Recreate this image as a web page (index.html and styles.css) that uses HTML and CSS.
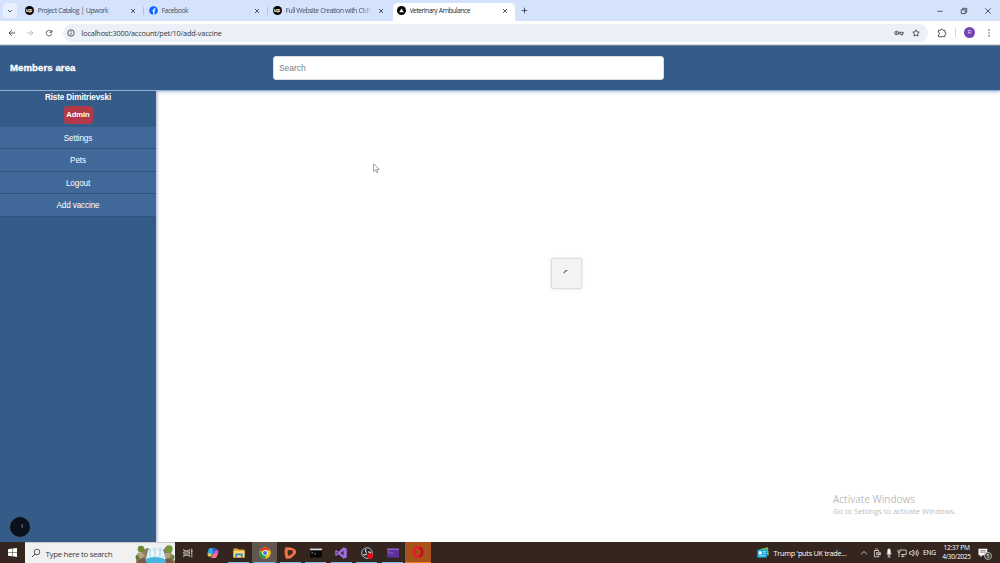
FILE: index.html
```html
<!DOCTYPE html>
<html lang="en">
<head>
  <meta charset="UTF-8">
  <title>Veterinary Ambulance</title>
  <meta name="viewport" content="width=device-width, initial-scale=1">
  <link rel="stylesheet" href="styles.css">
</head>
<body>
  <div class="tabs">
    <div class="tab-search"><svg width="6" height="6" viewBox="0 0 6 6"><path d="M1 2l2 2 2-2"/></svg></div>
    <div class="tab">
      <span class="favicon">up</span>
      <span class="tab-title t1">Project Catalog | Upwork</span>
      <svg class="close" viewBox="0 0 6 6"><path d="M1 1l4 4M5 1L1 5"/></svg>
    </div>
    <div class="tab line">
      <svg class="fb" viewBox="0 0 9 9"><circle cx="4.5" cy="4.5" r="4.3" fill="#0866ff"/><path d="M4.8 9V4.1Q4.8 2.7 6.4 2.9M3.3 5h2.8" stroke="#fff" stroke-width="1.2" fill="none"/></svg>
      <span class="tab-title t2">Facebook</span>
      <svg class="close" viewBox="0 0 6 6"><path d="M1 1l4 4M5 1L1 5"/></svg>
    </div>
    <div class="tab line">
      <span class="favicon">up</span>
      <span class="tab-title t3">Full Website Creation with CMS</span>
      <svg class="close" viewBox="0 0 6 6"><path d="M1 1l4 4M5 1L1 5"/></svg>
    </div>
    <div class="tab active">
      <span class="favicon"><svg width="5" height="5" viewBox="0 0 5 5"><path class="triangle" d="M2.5 .4L4.8 4.2H.2z"/></svg></span>
      <span class="tab-title t4">Veterinary Ambulance</span>
      <svg class="close" viewBox="0 0 6 6"><path d="M1 1l4 4M5 1L1 5"/></svg>
    </div>
    <svg class="plus" viewBox="0 0 7 7"><path d="M3.5 .7v5.6M.7 3.5h5.6"/></svg>
    <div class="window-buttons">
      <svg viewBox="0 0 8 8"><path d="M1.4 4.3h5.2"/></svg>
      <svg viewBox="0 0 8 8"><path d="M1.3 2.8h4v3.8h-4zM2.7 2.6V1.3h4v4H5.5"/></svg>
      <svg viewBox="0 0 8 8"><path d="M1.3 1.3l5.4 5.4M6.7 1.3L1.3 6.7"/></svg>
    </div>
  </div>

  <div class="toolbar">
    <div class="nav">
      <svg viewBox="0 0 8 8"><path d="M7.2 4H1M3.8 1.2L1 4l2.8 2.8"/></svg>
      <svg class="off" viewBox="0 0 8 8"><path d="M.8 4H7M4.2 1.2L7 4 4.2 6.8"/></svg>
      <svg viewBox="0 0 8 8"><path d="M6.6 3A2.8 2.8 0 1 0 6.8 4.7M6.9 1v2.3H4.6"/></svg>
    </div>
    <div class="address">
      <svg class="info" viewBox="0 0 8 8"><circle cx="4" cy="4" r="3.2"/><path d="M4 3.6v2.1M4 2.1v.8"/></svg>
      <span class="url">localhost:3000/account/pet/10/add-vaccine</span>
      <svg class="key" viewBox="0 0 10 8"><circle cx="2.6" cy="4" r="1.8"/><circle cx="2.6" cy="4" r=".4"/><path d="M4.4 3.3h4.8v1.5H8.6v1.1H6.9V4.8H4.4"/></svg>
      <svg class="star" viewBox="0 0 8 8"><path d="M4 .8l1 2.1 2.3.3-1.7 1.6.4 2.3L4 6 2 7.1l.4-2.3L.7 3.2 3 2.9z"/></svg>
    </div>
    <svg class="puzzle" viewBox="0 0 10 10"><path d="M1.4 2.3h2.3q0-1.2 1.1-1.2t1.1 1.2h2v2.1q1.2 0 1.2 1.1T7.9 6.6v2.1H1.4V6.7q1.2-.2 1.2-1.2T1.4 4.3z"/></svg>
    <span class="avatar">R</span>
    <svg class="dots" viewBox="0 0 4 8"><path d="M1.4.5h1.2v1.2H1.4zM1.4 3.4h1.2v1.2H1.4zM1.4 6.3h1.2v1.2H1.4z"/></svg>
  </div>

  <header class="header">
    <h1>Members area</h1>
    <input type="text" class="search" placeholder="Search">
  </header>

  <main class="page">
    <nav class="sidebar">
      <div class="user">Riste Dimitrievski</div>
      <span class="badge">Admin</span>
      <ul class="menu">
        <li>Settings</li>
        <li>Pets</li>
        <li>Logout</li>
        <li>Add vaccine</li>
      </ul>
      <div class="dev-button"><svg width="20" height="20" viewBox="0 0 20 20"><path d="M11.4 7.8l.8-.3v3.3" fill="none" stroke="#9aa3b3" stroke-width=".7"/></svg></div>
    </nav>
    <section class="content">
      <div class="loader"><svg width="10" height="10" viewBox="0 0 10 10"><path d="M2.9 5.3Q3.4 2.6 6.3 2.4" fill="none" stroke="#333b45" stroke-width="1"/></svg></div>
      <div class="activate">
        <p>Activate Windows</p>
        <small>Go to Settings to activate Windows.</small>
      </div>
      <svg class="cursor" viewBox="0 0 7 11"><path d="M.6.7v7.8l1.9-1.7 1.2 2.8 1.2-.5-1.1-2.7h2.5z" fill="#fff" stroke="#777" stroke-width=".7"/></svg>
    </section>
  </main>

  <footer class="taskbar">
    <div class="start"><svg width="9" height="9" viewBox="0 0 9 9"><path d="M0 1.2l4-.6v3.6H0zM4.5.6L9 0v4.2H4.5zM0 4.7h4v3.6l-4-.6zM4.5 4.7H9V9l-4.5-.7z" fill="#fff"/></svg></div>
    <div class="task-search">
      <svg width="10" height="10" viewBox="0 0 10 10"><circle cx="6" cy="4" r="2.8" fill="none" stroke="#333" stroke-width=".8"/><path d="M4 6L1 9" stroke="#333" stroke-width=".9"/></svg>
      <span>Type here to search</span>
      <svg class="falls" width="40" height="19" viewBox="0 0 40 19">
        <path d="M1 19V13l4-2 2-5 6-2 4 3h10l4-4 5 3 1 7 3 4v2z" fill="#8d7c62"/>
        <path d="M10 19l3-13 4-3 4 2 5-2 3 5 3 11z" fill="#d8eff6"/>
        <path d="M8 19q2-6 12-6t13 6z" fill="#48b5df"/>
        <path d="M14 8q6-3 13 0l1 4q-7-3-15 0z" fill="#f0f8f8"/>
        <path d="M15 5v7M20 4v7M25 4v8" stroke="#9bcbd9"/>
        <circle cx="6" cy="5" r="3.3" fill="#698c35"/><circle cx="34" cy="5" r="3.7" fill="#769638"/><circle cx="3" cy="13" r="2.5" fill="#5c7e32"/><circle cx="37" cy="13" r="2.5" fill="#6c8938"/>
        <path d="M2 9l5-1 3 4-5 3zM30 9l5 0 1 4-5 1z" fill="#b5a083"/><path d="M3 16l6-2 3 5H3zM30 15l6 0 2 4h-7z" fill="#765b43"/>
      </svg>
    </div>
    <div class="apps">
      <div class="app"><svg viewBox="0 0 12 12"><path d="M1.8 2v1.8h5.8V2M1.8 10V8.3h5.8V10M1.8 5h5.8v2H1.8zM9.8 1.5v9M9 4.5h1.6" fill="none" stroke="#ddd" stroke-width=".8"/></svg></div>
      <div class="app"><svg viewBox="0 0 12 12"><path d="M3.2 1h4L5.4 8Q5 9.7 3.2 9.5L1 9Q-.2 8 .6 5.6L1.5 2.6Q2 1 3.2 1" fill="#26a9e4"/><path d="M1 6.5l3.7-.3L4.3 9Q3.6 10 2 9.5.4 9 1 6.5" fill="#e5c545"/><path d="M6.8 1q1.8 0 2.2 2l.3 1H7L5.2 9.5q-.5 1.6-2 1.5h4.6q1.7-.2 2.3-2L11.5 5Q12 3 10 3 9.4 1 6.8 1" fill="#c15be5"/><path d="M6.4 6.7l4.3-.2-.8 2.6Q9.3 11 7.8 11H4Q5.5 9 6.4 6.7" fill="#ff7480"/><path d="M5 1h2.5Q9 1.2 9.3 4H7z" fill="#285fc9"/></svg></div>
      <div class="app run"><svg viewBox="0 0 12 12"><path d="M.5 1.5h4l1 1h6v8H.5z" fill="#e8a92c"/><path d="M.5 4h11v6.5H.5z" fill="#ffdc72"/><path d="M2.3 6.5h7.4v4H8V8.3H4v2.2H2.3z" fill="#2b8bd8"/></svg></div>
      <div class="app run current"><svg viewBox="0 0 12 12"><circle cx="6" cy="6" r="5.8" fill="#fbc116"/><path d="M6 6L.9 3.2A5.8 5.8 0 0 1 11.1 3.2H6z" fill="#e33b2e"/><path d="M.9 3.2A5.8 5.8 0 0 0 5.5 11.8L8.3 7.2 6 6 3.6 7.2z" fill="#24984a"/><circle cx="6" cy="6" r="2.8" fill="#fff"/><circle cx="6" cy="6" r="2.1" fill="#367be5"/></svg></div>
      <div class="app run"><svg viewBox="0 0 12 12"><path d="M1.2.5Q-.3 6 1.8 11.5q4 1 6.7-1.6L11.5 6.8Q12.8 4.2 10.9 2.2 7-.2 1.2.5z" fill="#ef7247"/><path d="M3.8 3.3Q3.3 6 4.2 8.6q2 .2 3.2-1l1.5-1.8Q9.1 3.4 7.4 3.1z" fill="#44291e"/></svg></div>
      <div class="app run"><svg viewBox="0 0 12 12"><path d="M0 1.5h12v9H0z" fill="#070707"/><path d="M0 1.5h12v1.8H0z" fill="#d9d9d9"/><path d="M1.5 5l1.2.8-1.2.8M4 6.8h2" stroke="#ccc" stroke-width=".6" fill="none"/></svg></div>
      <div class="app run"><svg viewBox="0 0 12 12"><path d="M8.5.2L11.8 1.6v8.8l-3.3 1.4-5-4.6-2.1 1.7L.2 8.3V3.7l1.2-.6 2.1 1.7zM8.5 3.8L5.7 6l2.8 2.2zM1.6 4.7v2.6L2.9 6z" fill="#9c6bdd" fill-rule="evenodd"/></svg></div>
      <div class="app run"><svg viewBox="0 0 12 12"><circle cx="6" cy="6" r="5.3" fill="#24252a" stroke="#ddd" stroke-width=".8"/><path d="M5.3 2q-2 2 .5 3.6M2.2 7.3q2.3 1.6 3.5-.8M7 5q2.5-.5 3 2" fill="none" stroke="#ddd" stroke-width="1.1"/><circle cx="9.2" cy="9" r="3" fill="#e80c17"/></svg></div>
      <div class="app run"><svg viewBox="0 0 12 12"><path d="M0 1.5h12v9H0z" fill="#5d309c"/><path d="M0 1.5h12v1.6H0z" fill="#8a60bc"/><path d="M1.5 4.5l1.2.8-1.2.8M4 6.2h2" stroke="#d4bdec" stroke-width=".6" fill="none"/></svg></div>
      <div class="app opera"><svg viewBox="0 0 12 12"><ellipse cx="6" cy="6" rx="4.1" ry="4.6" fill="none" stroke="#e61b2c" stroke-width="2.8"/><path d="M7.7 1.8Q10.2 3 10.2 6T7.7 10.2" fill="none" stroke="#b90f20" stroke-width="2.4"/></svg></div>
    </div>
    <div class="news">
      <svg width="12" height="12" viewBox="0 0 12 12"><path d="M3 2L11 .3l.8 8L6 9z" fill="#75bd45"/><path d="M.3 2.5h9.6v8.2H.3z" fill="#13a0db"/><path d="M1.6 4.3h3.2v3H1.6z" fill="#fff"/><path d="M6 4.6h2.7M6 6.4h2.7M1.6 8.8h7.1" stroke="#d5f3ff" stroke-width=".8"/></svg>
      <span>Trump 'puts UK trade...</span>
    </div>
    <div class="tray">
      <svg viewBox="0 0 10 10"><path d="M2 6.3l3-2.8 3 2.8"/></svg>
      <svg viewBox="0 0 10 10"><path d="M3.2 1h2.6M6.8 3.8V2.5H2.4v6.3h4.4V7.5M4.6 4.6h2.2v2.2H4.6zM6.8 5.2l1.6-.6v2.2l-1.6-.6"/></svg>
      <svg viewBox="0 0 10 10"><rect x="3.8" y="1" width="2.4" height="5" rx="1" fill="#fff"/><path d="M2.7 4.8Q2.8 7 5 7t2.3-2.2M5 7v2M3.5 9h3"/></svg>
      <svg viewBox="0 0 10 10"><path d="M2.8 2h6.4v4.5H4M5.8 6.5v2M4.2 8.6h3.3M1 1.8v2.4h2V1.8M2 4.2V9"/></svg>
      <svg viewBox="0 0 10 10"><path d="M.6 3.8h1.6l2-1.8v6l-2-1.8H.6zM5.6 3.5q1 1.5 0 3M7 2.5q1.8 2.5 0 5M8.3 1.5q2.4 3.5 0 7"/></svg>
    </div>
    <span class="lang">ENG</span>
    <div class="clock"><span>12:37 PM</span><span>4/30/2025</span></div>
    <div class="notify"><svg width="10" height="10" viewBox="0 0 10 10"><path d="M.5.7h8.8v6.5H4.5l-2 2v-2h-2z" fill="#fff"/><path d="M2 2.7h5.7M2 4.2h5.7" stroke="#493c36" stroke-width=".6"/></svg><span>5</span></div>
  </footer>
</body>
</html>
```
FILE: styles.css
```css
* {
  box-sizing: border-box;
}
body {
  margin: 0;
  height: 563px;
  display: flex;
  flex-direction: column;
  overflow: hidden;
  font-family: "Liberation Sans", Arial, sans-serif;
  background: #fff;
}
svg {
  display: block;
  flex: none;
}

/* browser */
.tabs {
  height: 21px;
  flex: none;
  display: flex;
  align-items: center;
  background: #d5e2fc;
  font-family: "Open Sans", sans-serif;
}
.tabs svg, .toolbar svg {
  fill: none;
  stroke: #30343a;
  stroke-width: .8;
}
.tab-search {
  width: 14px;
  height: 15px;
  margin: 0 3px;
  border-radius: 4px;
  background: #e8f0fe;
  display: flex;
  align-items: center;
  justify-content: center;
}
.tab {
  position: relative;
  width: 124px;
  height: 18px;
  margin-top: 3px;
  padding: 0 8px 3px 4.5px;
  display: flex;
  align-items: center;
  gap: 4px;
}
.line::before {
  content: "";
  position: absolute;
  left: -1px;
  top: 4px;
  width: 1px;
  height: 8px;
  background: #adc1e5;
}
.tab.active {
  margin-left: .5px;
  margin-right: 6px;
  width: 122px;
  padding-left: 4px;
  padding-right: 6.5px;
  background: #fff;
  border-radius: 5px 5px 0 0;
}
.favicon {
  width: 9px;
  height: 9px;
  flex: none;
  border-radius: 50%;
  background: #050505;
  color: #fff;
  font-size: 5px;
  font-weight: bold;
  line-height: 7px;
  display: flex;
  align-items: center;
  justify-content: center;
}
.favicon .triangle {
  fill: #fff;
  stroke: none;
}
.tabs .fb {
  width: 9px;
  height: 9px;
  stroke: none;
}
.tab-title {
  flex: none;
  width: 86px;
  font-size: 6.9px;
  line-height: 12px;
  color: #475060;
  white-space: nowrap;
  overflow: hidden;
}
.t1 {
  letter-spacing: -.48px;
}
.t2 {
  letter-spacing: -.5px;
}
.t3 {
  letter-spacing: -.52px;
  mask-image: linear-gradient(to right, #000 88%, transparent);
}
.t4 {
  letter-spacing: -.55px;
  color: #252a31;
}
.t1, .t2, .t3, .t4 {
  word-spacing: .4px;
}
.close {
  width: 6px;
  height: 6px;
  margin-left: auto;
}
.plus {
  width: 7px;
  height: 7px;
}
.window-buttons {
  margin-left: auto;
  margin-right: 8px;
  display: flex;
  gap: 16px;
}
.window-buttons svg {
  width: 8px;
  height: 8px;
}
.toolbar {
  height: 24px;
  flex: none;
  padding: 0 9px 0 7.5px;
  display: flex;
  align-items: center;
  background: #fff;
  border-bottom: 1px solid #dfe4ea;
}
.nav {
  width: 55.5px;
  display: flex;
  gap: 10.7px;
}
.nav svg {
  width: 8px;
  height: 8px;
}
.toolbar .off {
  stroke: #a9adb2;
}
.address {
  width: 865px;
  height: 18px;
  padding: 0 8px 0 4px;
  display: flex;
  align-items: center;
  border-radius: 9px;
  background: #ebf0f9;
}
.info {
  width: 8px;
  height: 8px;
}
.url {
  margin-left: 6.5px;
  font-family: "Open Sans", sans-serif;
  font-size: 7.3px;
  letter-spacing: -.16px;
  color: #343941;
}
.key {
  width: 10px;
  height: 8px;
  margin-left: auto;
}
.star {
  width: 8px;
  height: 8px;
  margin-left: 8px;
}
.puzzle {
  width: 10px;
  height: 10px;
  margin-left: 9px;
}
.avatar {
  position: relative;
  width: 11px;
  height: 11px;
  margin-left: 17px;
  border-radius: 50%;
  background: #7445b8;
  color: #e7d9ff;
  font-size: 5px;
  line-height: 11px;
  text-align: center;
}
.avatar::before {
  content: "";
  position: absolute;
  left: -9px;
  top: 1px;
  width: 1px;
  height: 9px;
  background: #ccdaf1;
}
.dots {
  width: 4px;
  height: 8px;
  margin-left: auto;
}
.toolbar .dots {
  fill: #30343a;
  stroke: none;
}

/* site */
.header {
  position: relative;
  z-index: 2;
  height: 46px;
  flex: none;
  display: flex;
  align-items: center;
  padding: 0 0 1px 10px;
  background: #355b89;
  border-top: 1px solid #718096;
  border-bottom: 1px solid #91aed7;
  box-shadow: 0 1px 3px #aebddb;
}
.header h1 {
  width: 263px;
  margin: 0;
  font-size: 9.6px;
  font-weight: bold;
  letter-spacing: .08px;
  color: #fff;
  -webkit-text-stroke: .3px #fff;
}
.search {
  width: 391px;
  height: 24px;
  padding: 0 5px;
  border: 1px solid #d7dfe8;
  border-radius: 3px;
  background: #fff;
  font-family: "Liberation Sans", Arial, sans-serif;
  font-size: 8.4px;
}
.search::placeholder {
  color: #7c7c7c;
}
.page {
  flex: 1;
  min-height: 0;
  display: flex;
}
.sidebar {
  position: relative;
  z-index: 3;
  width: 156px;
  display: flex;
  flex-direction: column;
  align-items: center;
  background: #355b89;
  color: #fff;
  font-size: 8.2px;
  box-shadow: 1px 0 3px #9baccd;
  clip-path: inset(0 -6px 0 0);
}
.user {
  margin-top: 2px;
  font-weight: bold;
  font-size: 8.2px;
  letter-spacing: -.14px;
  line-height: 10px;
}
.badge {
  width: 29px;
  height: 18px;
  margin-top: 3px;
  border-radius: 4px;
  background: #b23a48;
  font-size: 7.7px;
  font-weight: bold;
  letter-spacing: -.1px;
  line-height: 18px;
  text-align: center;
}
.menu {
  width: 100%;
  margin: 2.6px 0 0;
  padding: 0;
  list-style: none;
}
.menu li {
  height: 22.6px;
  border-bottom: 1px solid #2f527f;
  background: #406898;
  line-height: 23px;
  letter-spacing: -.14px;
  text-align: center;
}
.dev-button {
  width: 20px;
  height: 20px;
  margin: auto auto 5px 9.5px;
  border-radius: 50%;
  background: #0a111d;
  box-shadow: 0 0 0 .5px #405672;
}
.content {
  position: relative;
  flex: 1;
  display: flex;
  align-items: center;
  justify-content: center;
}
.loader {
  width: 31px;
  height: 31px;
  margin-right: 23px;
  margin-top: -86px;
  padding: 9px;
  border: 1px solid #dedede;
  border-radius: 2px;
  background: #f3f3f3;
  box-shadow: 0 0 3px #ddd;
}
.activate {
  position: absolute;
  right: 44px;
  bottom: 26px;
  width: 123px;
  font-family: "Open Sans", sans-serif;
  color: #bcbcbc;
  white-space: nowrap;
}
.activate p {
  margin: 0;
  font-size: 10px;
  line-height: 13px;
}
.activate small {
  display: block;
  font-size: 7.5px;
  line-height: 10px;
}
.cursor {
  position: absolute;
  left: 216.5px;
  top: 71.5px;
  width: 7px;
  height: 11px;
}

/* taskbar */
.taskbar {
  height: 21px;
  flex: none;
  display: flex;
  align-items: center;
  background: #34251e;
  color: #fff;
  font-family: "Open Sans", sans-serif;
  font-size: 7px;
  white-space: nowrap;
}
.start {
  width: 25px;
  padding-left: 8px;
}
.task-search {
  width: 150px;
  height: 21px;
  display: flex;
  align-items: center;
  padding-left: 6px;
  gap: 4.5px;
  border-top: 1px solid #c9c9c9;
  background: #f1f1f1;
  color: #3d3d3d;
  font-size: 8px;
  letter-spacing: -.36px;
}
.falls {
  margin-left: auto;
}
.apps {
  width: 256px;
  display: grid;
  grid-template-columns: repeat(10, 1fr);
}
.app {
  height: 21px;
  display: flex;
  align-items: center;
  justify-content: center;
}
.app svg {
  width: 12px;
  height: 12px;
}
.run {
  background: linear-gradient(#7bb7e6, #7bb7e6) bottom / 21px 1px no-repeat;
}
.current {
  background-color: #625650;
}
.opera {
  background: #a8521b;
  border-bottom: 1px solid #f37817;
}
.news {
  margin-left: auto;
  width: 101px;
  display: flex;
  align-items: center;
  gap: 4px;
}
.news span {
  font-size: 7.3px;
  letter-spacing: -.25px;
}
.tray {
  display: flex;
  gap: 2.4px;
  margin-left: 1px;
}
.tray svg {
  width: 10px;
  height: 10px;
  fill: none;
  stroke: #fff;
  stroke-width: .7;
}
.lang {
  width: 20px;
  margin-left: 4px;
  font-size: 6.6px;
  letter-spacing: -.2px;
}
.clock {
  width: 27px;
  font-size: 6.6px;
  letter-spacing: -.3px;
  line-height: 9px;
  padding-bottom: 1px;
  display: flex;
  flex-direction: column;
  align-items: center;
}
.notify {
  position: relative;
  width: 30px;
  padding-left: 8px;
}
.notify span {
  position: absolute;
  left: 14px;
  top: 4px;
  width: 8px;
  height: 8px;
  border: .5px solid #aaa;
  border-radius: 50%;
  background: #44372f;
  font-size: 5px;
  line-height: 7px;
  text-align: center;
}
```
